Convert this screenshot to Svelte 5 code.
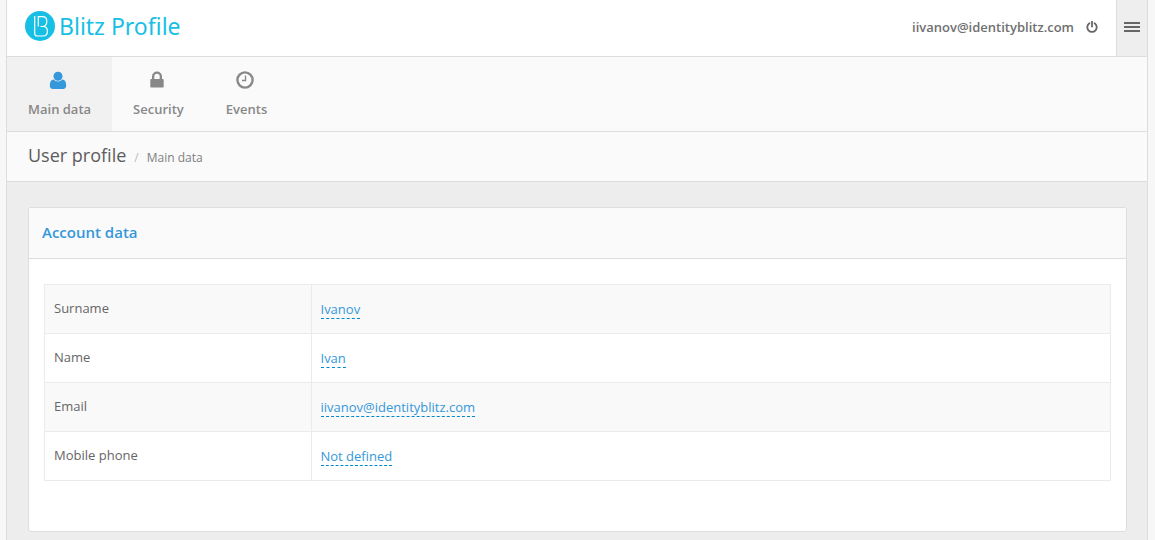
<script>
  const tabs = [
    { label: 'Main data', icon: 'user', active: true },
    { label: 'Security', icon: 'lock', active: false },
    { label: 'Events', icon: 'clock', active: false }
  ];
  const fields = [
    { label: 'Surname', value: 'Ivanov' },
    { label: 'Name', value: 'Ivan' },
    { label: 'Email', value: 'iivanov@identityblitz.com' },
    { label: 'Mobile phone', value: 'Not defined' }
  ];
</script>

<div class="shell">
  <header class="top">
    <a class="brand" href="#home">
      <svg width="30" height="30" viewBox="0 0 30 30" aria-hidden="true">
        <circle cx="15" cy="15" r="15" fill="#18bfe4" />
        <path d="M9.7 5V22.5Q9.7 25 12.2 25H18Q22.4 25 22.4 20.2Q22.4 15.5 18 15.5H15.5M18 15.5Q21.8 15 21.8 10.3Q21.8 5.6 17.5 5.6H13.3V15.5" fill="none" stroke="#fff" stroke-width="1.2" />
      </svg>
      <span>Blitz Profile</span>
    </a>
    <div class="account">
      <span>iivanov@identityblitz.com</span>
      <button class="power" aria-label="Log out">
        <svg width="12" height="12" viewBox="0 0 12 12" aria-hidden="true">
          <path d="M3.4 2.3A4.7 4.7 0 1 0 8.6 2.3M6 .4V5.6" fill="none" stroke="#666" stroke-width="1.8" stroke-linecap="round" />
        </svg>
      </button>
    </div>
    <button class="menu" aria-label="Menu">
      <svg width="16" height="10" viewBox="0 0 16 10" aria-hidden="true">
        <path d="M0 1H16M0 5H16M0 9H16" stroke="#666" stroke-width="2" />
      </svg>
    </button>
  </header>

  <nav>
    {#each tabs as tab}
      <a class="tab" class:active={tab.active} href="#{tab.icon}">
        <svg width="18" height="18" viewBox="0 0 18 18" aria-hidden="true">
          {#if tab.icon === 'user'}
            <path d="M4.6 8.6Q6.5 10.6 9 10.6T13.4 8.6C16 8.8 17.2 11.2 17.2 14.6Q17.2 18 14 18H4Q.8 18 .8 14.6C.8 11.2 2 8.8 4.6 8.6Z" />
            <circle cx="9" cy="5.2" r="4.5" />
          {:else if tab.icon === 'lock'}
            <path fill-rule="evenodd" d="M3.3 8H4V5.5a5 5 0 0 1 10 0V8h.7q1 0 1 1v6.5q0 1-1 1H3.3q-1 0-1-1V9q0-1 1-1ZM6.3 8h5.4V5.5a2.7 2.7 0 0 0-5.4 0Z" />
          {:else}
            <circle cx="9" cy="9" r="7.6" fill="none" stroke="currentColor" stroke-width="2.4" />
            <path d="M9.5 4.5V9.5H6" fill="none" stroke="currentColor" stroke-width="1.3" />
          {/if}
        </svg>
        <span>{tab.label}</span>
      </a>
    {/each}
  </nav>

  <div class="crumbs">
    <h1>User profile</h1>
    <span class="slash">/</span>
    <span class="here">Main data</span>
  </div>

  <main>
    <section class="card">
      <h2>Account data</h2>
      <div class="body">
        <table>
          <tbody>
            {#each fields as field}
              <tr>
                <th scope="row">{field.label}</th>
                <td><a href="#edit">{field.value}</a></td>
              </tr>
            {/each}
          </tbody>
        </table>
      </div>
    </section>
  </main>
</div>

<style>
  :global(body) {
    margin: 0;
    background: #f7f7f7;
  }
  .shell, .shell * {
    box-sizing: border-box;
  }
  .shell {
    display: flex;
    flex-direction: column;
    min-height: 100vh;
    margin: 0 7px 0 6px;
    border: solid #ddd;
    border-width: 0 1px;
    background: #ededed;
    color: #666;
    font: 13px/20px "Open Sans", sans-serif;
  }
  a {
    text-decoration: none;
  }
  button {
    padding: 0;
    border: 0;
    background: none;
    cursor: pointer;
  }
  svg {
    display: block;
  }
  .top {
    display: flex;
    height: 57px;
    border-bottom: 1px solid #ddd;
    background: #fff;
  }
  .brand {
    display: flex;
    align-items: center;
    gap: 4px;
    padding: 0 18px 4px;
    color: #18bfe4;
    font: 23px/30px "Noto Sans", sans-serif;
  }
  .account {
    display: flex;
    align-items: center;
    gap: 12px;
    margin-left: auto;
    padding: 0 18px 2px 0;
    color: #707070;
    font-weight: 600;
  }
  .menu {
    display: flex;
    align-items: center;
    justify-content: center;
    width: 31px;
    padding-bottom: 2px;
    border-left: 1px solid #ddd;
    background: #eee;
  }
  nav {
    display: flex;
    height: 75px;
    border-bottom: 1px solid #ddd;
    background: #fafafa;
  }
  .tab {
    display: flex;
    flex-direction: column;
    align-items: center;
    gap: 10px;
    padding: 14px 21px 0;
    color: #888;
    font-weight: 600;
  }
  .tab svg {
    fill: currentColor;
    margin-right: 3px;
  }
  .tab.active {
    background: #f1f1f1;
  }
  .tab.active svg {
    color: #3598db;
  }
  .crumbs {
    display: flex;
    align-items: baseline;
    gap: 8px;
    height: 50px;
    padding: 11px 21px;
    border-bottom: 1px solid #ddd;
    background: #fafafa;
    font-size: 12px;
  }
  h1, h2 {
    margin: 0;
  }
  h1 {
    color: #5c5c5c;
    font-size: 18px;
    line-height: 24px;
    font-weight: 400;
  }
  .slash {
    color: #bbb;
  }
  .here {
    color: #808080;
  }
  main {
    padding: 25px 20px 8px 21px;
  }
  .card {
    border: 1px solid #ddd;
    border-radius: 3px;
    overflow: hidden;
    background: #fff;
  }
  h2 {
    padding: 14px 13px 16px;
    border-bottom: 1px solid #ddd;
    background: #fafafa;
    color: #3598db;
    font-size: 15px;
    line-height: 20px;
    font-weight: 600;
  }
  .body {
    padding: 25px 15px 50px;
  }
  table {
    width: 100%;
    table-layout: fixed;
    border-collapse: collapse;
  }
  th, td {
    height: 49px;
    padding: 0 9px;
    border: 1px solid #ebebeb;
    text-align: left;
    font-weight: 400;
  }
  th {
    width: 25%;
    padding-bottom: 2px;
  }
  tr:nth-child(odd) {
    background: #f9f9f9;
  }
  td a {
    border-bottom: 1px dashed #0088cc;
    color: #3598db;
  }
</style>
